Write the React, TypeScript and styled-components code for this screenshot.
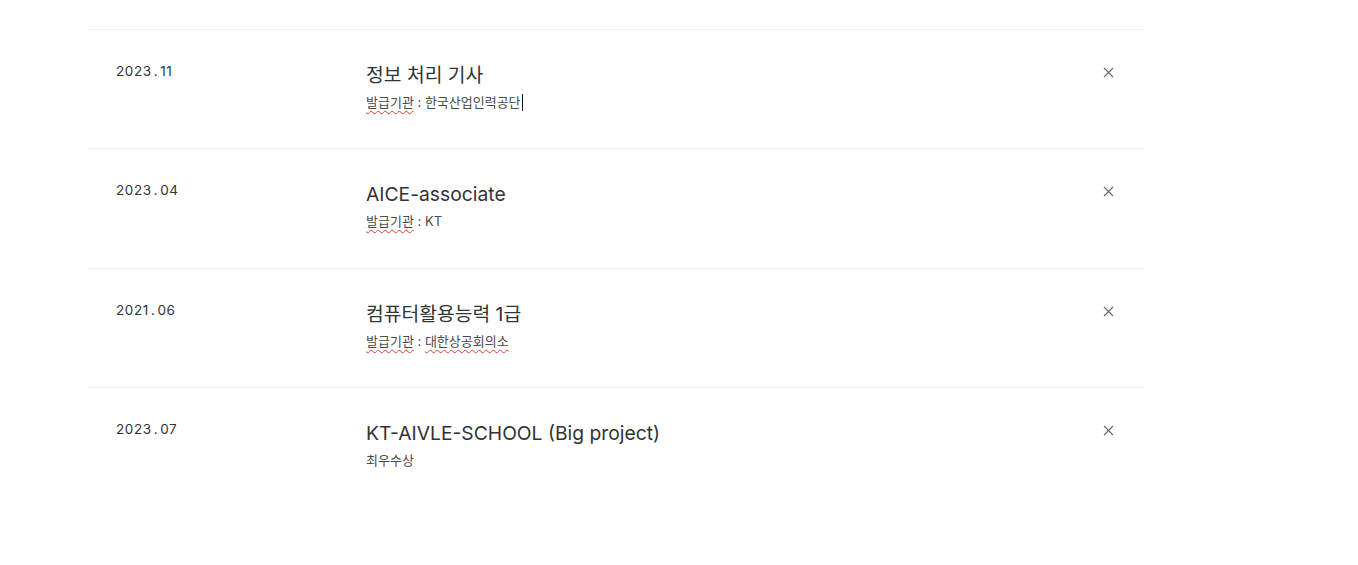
import React from "react";
import styled, { createGlobalStyle } from "styled-components";

const Global = createGlobalStyle`
  html, body { margin: 0; padding: 0; background: #fff; }
  body { font-family: Inter, "Noto Sans CJK KR", sans-serif; color: #333; }
`;

const Page = styled.div`
  padding: 29px 0 0 87px;
  width: 1058px;
`;

const List = styled.ul`
  list-style: none;
  margin: 0;
  padding: 0;
`;

const Row = styled.li`
  display: flex;
  align-items: flex-start;
  height: 119px;
  box-sizing: border-box;
  border-top: 1px solid #eeeeee;
  padding: 32px 27px 0 29px;
  &:nth-child(2n) { height: 120px; }
`;

const DateCell = styled.div`
  width: 250px;
  flex: none;
  font-size: 13.5px;
  line-height: 18px;
  letter-spacing: 0.6px;
  color: #333;
`;

const Dot = styled.span`
  margin: 0 2px;
`;

const Body = styled.div`
  flex: 1;
  display: flex;
  flex-direction: column;
  gap: 6px;
  padding-top: 1px;
`;

const Title = styled.div`
  font-size: 19.3px;
  line-height: 24px;
  color: #333;
`;

const Sub = styled.div`
  font-size: 13px;
  line-height: 18px;
  color: #4a4a4a;
`;

const Misspelled = styled.span`
  text-decoration: underline wavy #e53935;
  text-decoration-thickness: 1px;
  text-underline-offset: 3px;
`;

const Caret = styled.span`
  display: inline-block;
  width: 1px;
  height: 17px;
  background: #111;
  vertical-align: -4px;
  margin-left: 1px;
`;

const CloseBtn = styled.button`
  flex: none;
  width: 20px;
  height: 20px;
  padding: 0;
  border: none;
  background: none;
  display: flex;
  align-items: center;
  justify-content: center;
  cursor: pointer;
`;

const XIcon = () => (
  <svg width="11" height="11" viewBox="0 0 11 11">
    <path d="M1 1 L10 10 M10 1 L1 10" stroke="#666" strokeWidth="1.1" fill="none" />
  </svg>
);

const DateText = ({ y, m }: { y: string; m: string }) => (
  <DateCell>
    {y}
    <Dot>.</Dot>
    {m}
  </DateCell>
);

export default function App() {
  return (
    <>
      <Global />
      <Page>
        <List>
          <Row>
            <DateText y="2023" m="11" />
            <Body>
              <Title>정보 처리 기사</Title>
              <Sub>
                <Misspelled>발급기관</Misspelled> : 한국산업인력공단
                <Caret />
              </Sub>
            </Body>
            <CloseBtn aria-label="삭제"><XIcon /></CloseBtn>
          </Row>
          <Row>
            <DateText y="2023" m="04" />
            <Body>
              <Title>AICE-associate</Title>
              <Sub>
                <Misspelled>발급기관</Misspelled> : KT
              </Sub>
            </Body>
            <CloseBtn aria-label="삭제"><XIcon /></CloseBtn>
          </Row>
          <Row>
            <DateText y="2021" m="06" />
            <Body>
              <Title>컴퓨터활용능력 1급</Title>
              <Sub>
                <Misspelled>발급기관</Misspelled> : <Misspelled>대한상공회의소</Misspelled>
              </Sub>
            </Body>
            <CloseBtn aria-label="삭제"><XIcon /></CloseBtn>
          </Row>
          <Row>
            <DateText y="2023" m="07" />
            <Body>
              <Title>KT-AIVLE-SCHOOL (Big project)</Title>
              <Sub>최우수상</Sub>
            </Body>
            <CloseBtn aria-label="삭제"><XIcon /></CloseBtn>
          </Row>
        </List>
      </Page>
    </>
  );
}
